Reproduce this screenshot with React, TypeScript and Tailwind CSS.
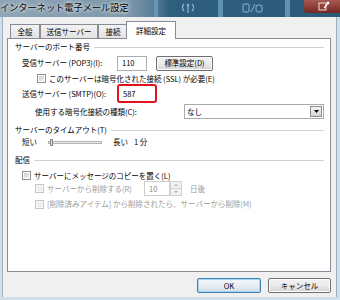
import type { ReactNode } from "react";

function Checkbox({ disabled }: { disabled?: boolean }) {
  return (
    <span
      className={
        disabled
          ? "flex h-[9px] w-[9px] shrink-0 border border-[#c6c6c6] bg-[#fafafa] p-px"
          : "flex h-[9px] w-[9px] shrink-0 border border-[#8e8f8f] bg-white p-px"
      }
    >
      <span
        className={
          disabled
            ? "flex-1 bg-[#eeeeee]"
            : "flex-1 bg-linear-to-br from-[#c9ccd1] to-[#f4f4f4]"
        }
      />
    </span>
  );
}

function GroupHeader({ title, className }: { title: string; className?: string }) {
  return (
    <div className={"flex h-[12px] items-center gap-[4px] " + (className ?? "")}>
      <span className="whitespace-nowrap">{title}</span>
      <span className="h-px flex-1 bg-[#cdd2d6]" />
    </div>
  );
}

function Tab({ children, selected, w }: { children: ReactNode; selected?: boolean; w: string }) {
  return (
    <div
      className={
        selected
          ? "relative z-10 -mb-px -mx-[2px] flex h-[18px] items-center justify-center border border-b-0 border-[#898c95] bg-white " + w
          : "flex h-[14px] items-center justify-center border border-b-0 border-[#898c95] bg-linear-to-b from-[#f3f3f3] to-[#e3e3e3] " + w
      }
    >
      {children}
    </div>
  );
}

function Button({ children, primary, w }: { children: ReactNode; primary?: boolean; w: string }) {
  return (
    <div
      className={
        primary
          ? "flex h-[15px] items-center justify-center rounded-[2px] border border-[#3c7fb1] bg-linear-to-b from-[#f4f8fb] via-[#e8eef3] to-[#d3dde6] shadow-[inset_0_0_0_1px_#a8d7f4] " + w
          : "flex h-[15px] items-center justify-center rounded-[2px] border border-[#707070] bg-linear-to-b from-[#f2f2f2] via-[#ebebeb] to-[#d4d4d4] shadow-[inset_0_0_0_1px_#fcfcfc] " + w
      }
    >
      {children}
    </div>
  );
}

export default function App() {
  return (
    <div className="flex h-[300px] w-[340px] flex-col overflow-hidden bg-[#c2d6e5] font-['Noto_Sans_CJK_JP',sans-serif] text-[7.5px] leading-none text-black">
      {/* title bar */}
      <div className="relative h-[17px] shrink-0 bg-[linear-gradient(to_right,#8ea5b6_0%,#7d97aa_38%,#5a7f98_45%,#2f5f7e_50%,#2c5b79_100%)]">
        <span className="absolute left-[154px] top-0 h-[17px] w-[4px] bg-[#6fa4c8]/70" />
        <span className="absolute left-[218px] top-0 h-[17px] w-[5px] bg-[#73a9cd]/70" />
        <span className="absolute left-[285px] top-0 h-[17px] w-[5px] bg-[#73a9cd]/70" />
        <svg className="absolute left-[181px] top-[2px]" width="14" height="11" viewBox="0 0 14 11">
          <path d="M7 3v8M3 2c-2 2-2 5 0 7M11 2c2 2 2 5 0 7" stroke="#86b5d6" strokeWidth="1.3" fill="none" />
          <circle cx="7" cy="3" r="1.3" fill="#86b5d6" />
        </svg>
        <svg className="absolute left-[242px] top-[2px]" width="22" height="11" viewBox="0 0 22 11">
          <rect x="1" y="2" width="6" height="8" rx="1" stroke="#86b5d6" strokeWidth="1" fill="none" />
          <path d="M9 10l4-8" stroke="#86b5d6" strokeWidth="1" />
          <rect x="14" y="3" width="6" height="7" rx="2" stroke="#86b5d6" strokeWidth="1" fill="none" />
        </svg>
        <div className="absolute left-[304px] top-0 flex h-[13px] w-[40px] items-center justify-center rounded-b-[3px] bg-linear-to-b from-[#a85a52] to-[#742620]">
          <svg width="12" height="11" viewBox="0 0 12 11">
            <rect x="1" y="2" width="7" height="7" stroke="#f0e0dc" strokeWidth="1" fill="none" />
            <path d="M6 7l5-6M9 1l2 2" stroke="#ffffff" strokeWidth="1.2" fill="none" />
          </svg>
        </div>
        <span className="absolute left-0 top-[3px] whitespace-nowrap text-[9.2px] [text-shadow:0_0_5px_rgba(255,255,255,0.95),0_0_3px_rgba(255,255,255,0.9)]">
          インターネット電子メール設定
        </span>
      </div>

      <div className="flex flex-1">
        <div className="w-[3px] border-r border-[#9fb0bd] bg-[#cfe0ec]" />
        <div className="flex flex-1 flex-col bg-[#f0f0f0]">
          {/* tabs */}
          <div className="mt-[5px] flex h-[16px] items-end pl-[7px]">
            <Tab w="w-[30px]">全般</Tab>
            <Tab w="w-[58px]">送信サーバー</Tab>
            <Tab w="w-[30px]">接続</Tab>
            <Tab w="w-[50px]" selected>
              詳細設定
            </Tab>
          </div>

          {/* panel */}
          <div className="ml-[4px] mr-[5px] flex h-[234px] flex-col border border-[#898c95] bg-white pl-[7px] pr-[6px] pt-[2px]">
            <GroupHeader title="サーバーのポート番号" />
            <div className="mt-[2px] flex h-[16px] items-center pl-[7px]">
              <span className="w-[95px] whitespace-nowrap">受信サーバー (POP3)(I):</span>
              <div className="flex h-[15px] w-[30px] items-center border border-[#abadb3] bg-white pl-[4px]">110</div>
              <Button w="ml-[9px] w-[57px]">標準設定(D)</Button>
            </div>
            <div className="flex h-[15px] items-center gap-[3px] pl-[22px]">
              <Checkbox />
              <span className="whitespace-nowrap">このサーバーは暗号化された接続 (SSL) が必要(E)</span>
            </div>
            <div className="-mt-[2px] flex h-[19px] items-center pl-[7px]">
              <span className="w-[95px] whitespace-nowrap">送信サーバー (SMTP)(O):</span>
              <div className="flex h-[19px] w-[40px] items-center rounded-[3px] border-2 border-[#e2121c] bg-white pl-[4px]">
                587
              </div>
            </div>
            <div className="mt-px flex h-[15px] items-center pl-[20px]">
              <span className="whitespace-nowrap">使用する暗号化接続の種類(C):</span>
              <div className="ml-auto flex h-[15px] w-[140px] items-center border border-[#a9a9a9] bg-white pl-[2px] pr-px">
                <span className="flex-1">なし</span>
                <div className="flex h-[11px] w-[12px] items-center justify-center border border-[#8f8f8f] bg-linear-to-b from-[#f4f4f4] to-[#d3d3d3]">
                  <svg width="5" height="3" viewBox="0 0 5 3">
                    <path d="M0 0h5L2.5 3z" fill="#000" />
                  </svg>
                </div>
              </div>
            </div>

            <GroupHeader title="サーバーのタイムアウト(T)" className="mt-[5px]" />
            <div className="flex h-[12px] items-center pl-[7px]">
              <span className="w-[26px] whitespace-nowrap">短い</span>
              <div className="flex h-[3px] w-[54px] items-center border border-[#b4b4b4] bg-[#e9e9e9] pl-[1px]">
                <span className="h-[7px] w-[3px] border border-[#8a8a8a] bg-[#dcdcdc]" />
              </div>
              <span className="ml-[11px] whitespace-nowrap">長い</span>
              <span className="ml-[6px] whitespace-nowrap">1 分</span>
            </div>

            <GroupHeader title="配信" className="mt-[6px]" />
            <div className="mt-[4px] flex h-[11px] items-center gap-[3px] pl-[7px]">
              <Checkbox />
              <span className="whitespace-nowrap">サーバーにメッセージのコピーを置く(L)</span>
            </div>
            <div className="flex h-[15px] items-center pl-[20px] text-[#9a9a9a]">
              <Checkbox disabled />
              <span className="ml-[3px] w-[97px] whitespace-nowrap">サーバーから削除する(R)</span>
              <div className="flex h-[15px] w-[26px] items-center border border-[#cdcdcd] bg-white pl-[4px] text-[#8a8a8a]">10</div>
              <div className="flex h-[15px] w-[12px] flex-col">
                <div className="flex flex-1 items-center justify-center border border-[#d2d2d2] bg-[#f2f2f2]">
                  <svg width="4" height="2" viewBox="0 0 4 2">
                    <path d="M0 2h4L2 0z" fill="#b0b0b0" />
                  </svg>
                </div>
                <div className="flex flex-1 items-center justify-center border border-t-0 border-[#d2d2d2] bg-[#f2f2f2]">
                  <svg width="4" height="2" viewBox="0 0 4 2">
                    <path d="M0 0h4L2 2z" fill="#b0b0b0" />
                  </svg>
                </div>
              </div>
              <span className="ml-[8px] whitespace-nowrap">日後</span>
            </div>
            <div className="mt-[2px] flex h-[12px] items-center gap-[3px] pl-[20px] text-[#9a9a9a]">
              <Checkbox disabled />
              <span className="whitespace-nowrap">[削除済みアイテム] から削除されたら、サーバーから削除(M)</span>
            </div>
          </div>

          {/* buttons */}
          <div className="mt-[6px] flex justify-end gap-[7px] pr-[5px]">
            <Button primary w="w-[64px]">OK</Button>
            <Button w="w-[63px]">キャンセル</Button>
          </div>
        </div>
        <div className="w-[4px] border-l border-[#9fb0bd] bg-[#cfe0ec]" />
      </div>
      <div className="h-[3px] shrink-0 bg-[#cfe0ec]" />
    </div>
  );
}
